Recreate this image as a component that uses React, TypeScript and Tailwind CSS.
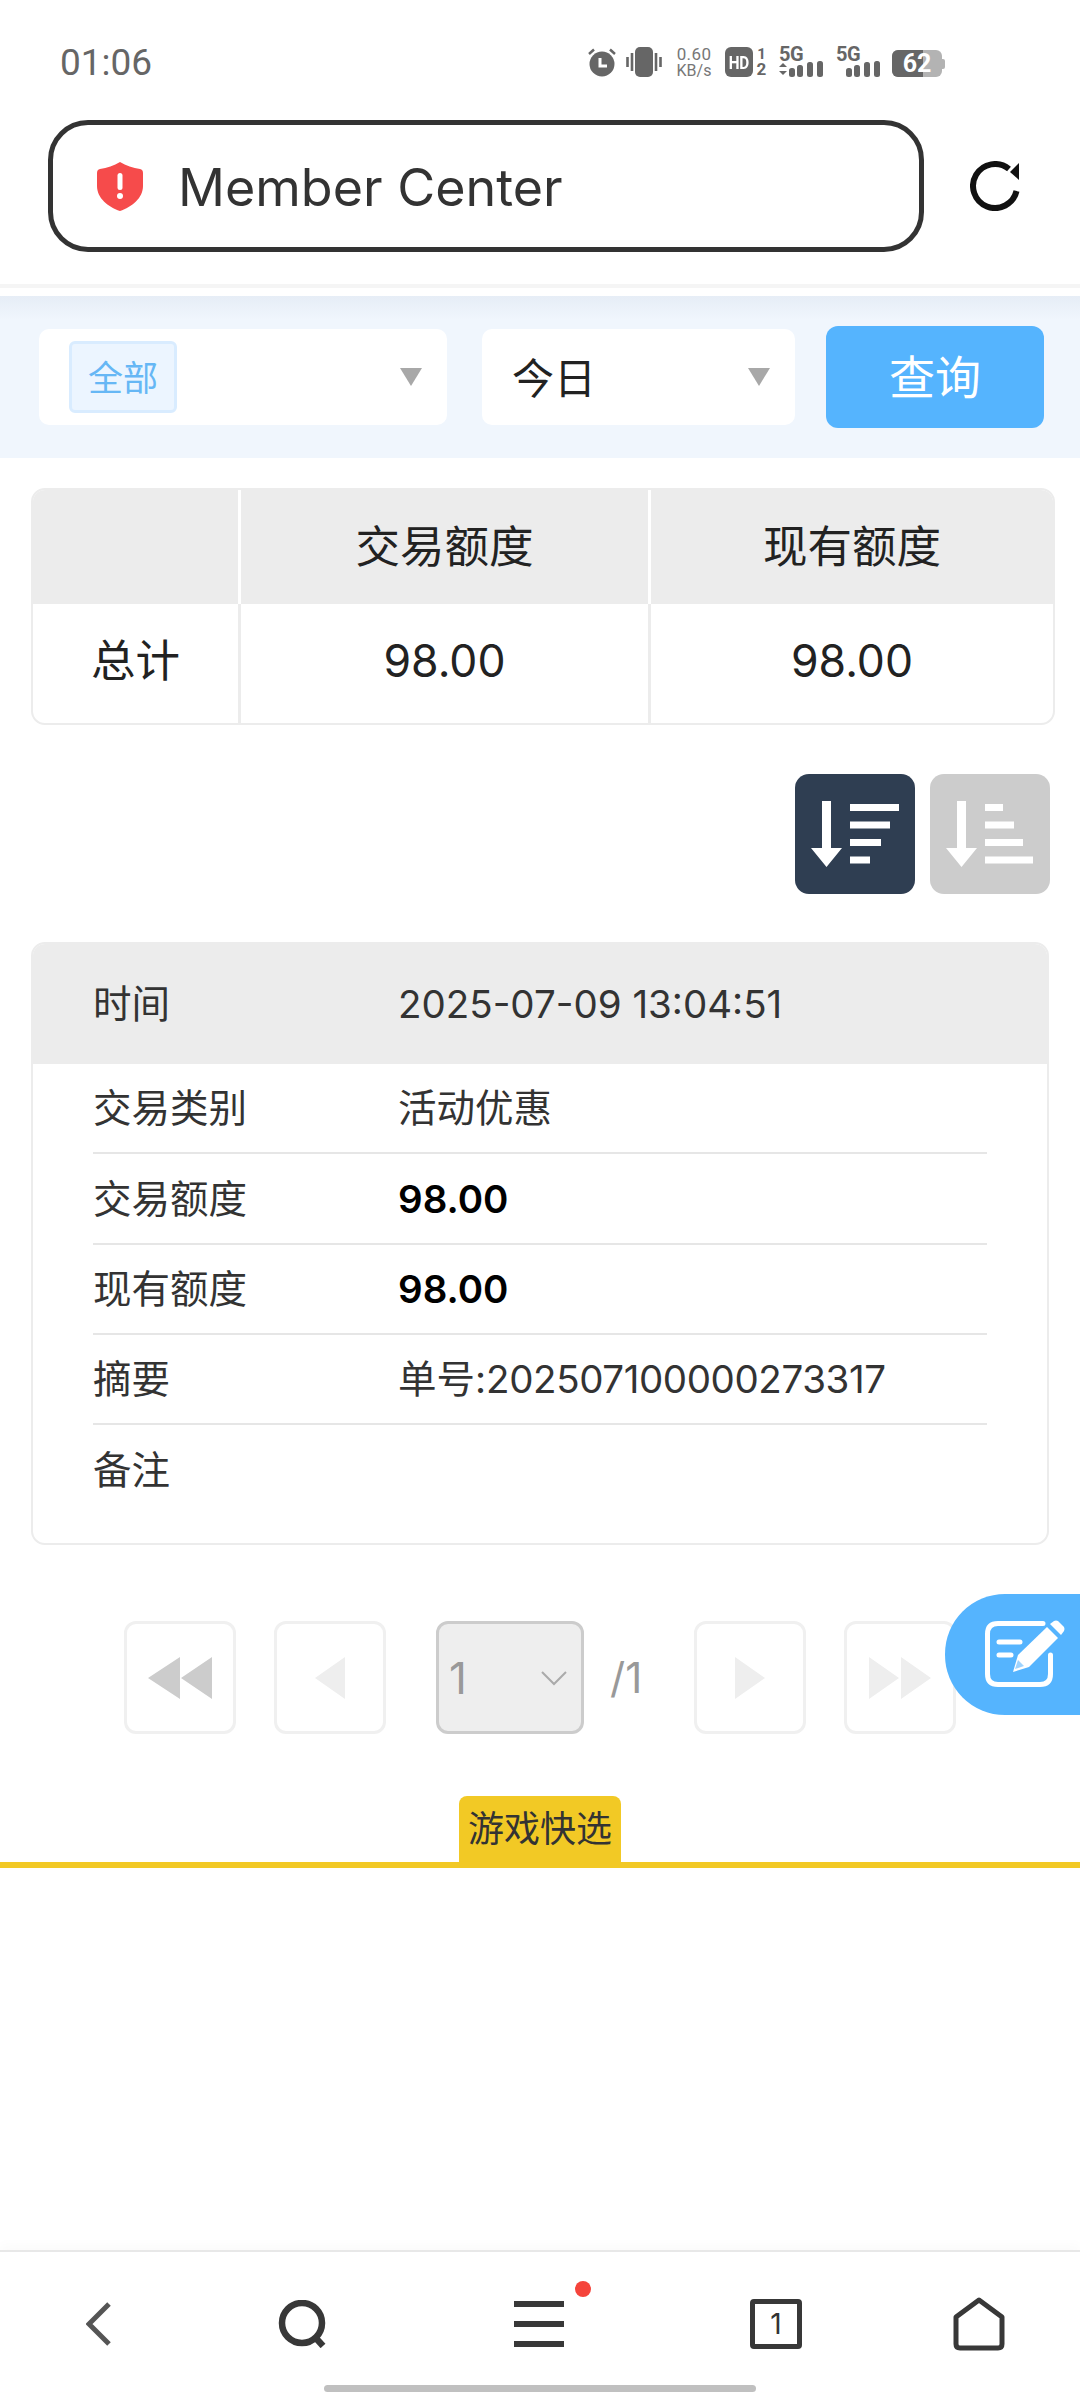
import type { ReactNode } from 'react';

const font = "font-['Inter','Noto_Sans_CJK_SC',sans-serif]";

function StatusIcons() {
  return (
    <div className="ml-auto mr-[135px] flex items-center h-[36px] text-[#666] font-['Roboto',sans-serif]">
      {/* alarm */}
      <svg width="30" height="30" viewBox="0 0 30 30">
        <circle cx="15" cy="17" r="12.5" fill="#666" />
        <path d="M2 7l5-4.5M28 7l-5-4.5" stroke="#666" strokeWidth="2.5" />
        <path d="M13 11v8h7" stroke="#fff" strokeWidth="3" fill="none" />
      </svg>
      {/* vibrate */}
      <svg width="36" height="30" viewBox="0 0 36 30" className="ml-[9px]">
        <rect x="9" y="0" width="18" height="30" rx="5" fill="#666" />
        <path d="M6 6v18M1.5 10v10M30 6v18M34.500 10v10" stroke="#666" strokeWidth="2.6" />
      </svg>
      <div className="ml-[13px] w-[38px] flex flex-col items-center leading-none text-[#777]">
        <span className="text-[17px] leading-[17px] tracking-[0.4px]">0.60</span>
        <span className="text-[16px] leading-[15px]">KB/s</span>
      </div>
      {/* HD + sim */}
      <div className="ml-[12px] w-[28px] h-[30px] rounded-[6px] bg-[#666] flex items-center justify-center">
        <span className="text-white text-[18px] font-bold tracking-[-0.5px] scale-x-[0.85]">HD</span>
      </div>
      <div className="ml-[2px] w-[13px] flex flex-col items-center font-bold">
        <span className="text-[15px] leading-[15px]">1</span>
        <span className="text-[17px] leading-[15px]">2</span>
      </div>
      <Signal className="ml-[11px]" arrows />
      <Signal className="ml-[13px]" />
      {/* battery */}
      <div className="ml-[12px] w-[53px] h-[27px] flex items-center mt-[3px]">
        <div className="relative w-[50px] h-[27px] rounded-[6px] overflow-hidden bg-[#b3b3b3] flex items-center justify-center">
          <div className="absolute left-0 top-0 h-full w-[31px] bg-[#666]" />
          <span className="relative text-white text-[25px] font-bold leading-none">62</span>
        </div>
        <div className="w-[3px] h-[10px] bg-[#b3b3b3] rounded-r-[2px]" />
      </div>
    </div>
  );
}

function Signal({ className, arrows }: { className?: string; arrows?: boolean }) {
  return (
    <div className={`relative w-[44px] h-[30px] ${className ?? ''}`}>
      <span className="absolute left-0 top-[-4px] text-[20px] font-bold leading-[22px] tracking-[-0.5px]">5G</span>
      <svg width="44" height="30" viewBox="0 0 44 30" className="absolute left-0 top-0">
        {arrows && <path d="M0 20l4-4 4 4zM0 24l4 4 4-4z" fill="#666" />}
        <rect x="10" y="21" width="6" height="9" rx="2.5" fill="#666" />
        <rect x="18" y="18" width="6" height="12" rx="2.500" fill="#666" />
        <rect x="28" y="15" width="6" height="15" rx="2.500" fill="#666" />
        <rect x="38" y="14" width="6" height="16" rx="2.500" fill="#666" />
      </svg>
    </div>
  );
}

function Caret() {
  return <div className="w-0 h-0 border-l-[11px] border-r-[11px] border-t-[18px] border-l-transparent border-r-transparent border-t-[#a8a8a8]" />;
}

function SortIcon({ bars, color }: { bars: number[]; color: string }) {
  return (
    <div className="w-[120px] h-[120px] rounded-[14px] flex items-center justify-center" style={{ backgroundColor: color }}>
      <svg width="120" height="120" viewBox="0 0 120 120" className="blur-[0.6px]">
        <path d="M27 27h9v47h11L31.5 93 16 74h11z" fill="#fff" />
        {bars.map((w, i) => (
          <rect key={i} x="55" y={30 + i * 17.5} width={w} height="7" fill="#fff" />
        ))}
      </svg>
    </div>
  );
}

function DetailRow({ label, children, h, last }: { label: string; children?: ReactNode; h: string; last?: boolean }) {
  return (
    <div className={`flex items-center pt-[2px] ${h} ${last ? '' : 'border-b-2 border-[#e6e6e6]'}`}>
      <span className="w-[305px] text-[#333]">{label}</span>
      <span className="text-[#333]">{children}</span>
    </div>
  );
}

function PageButton({ children }: { children: ReactNode }) {
  return (
    <div className="w-[112px] h-[113px] rounded-[12px] border-[3px] border-[#f0f0f0] flex items-center justify-center">
      {children}
    </div>
  );
}

export default function App() {
  return (
    <div className={`relative w-[1080px] h-[2400px] bg-white overflow-hidden flex flex-col ${font}`}>
      {/* status bar */}
      <div className="h-[120px] pt-[44px] pl-[60px]">
        <div className="flex items-center h-[36px]">
          <span className="text-[37px] leading-none text-[#666] font-['Roboto',sans-serif]">01:06</span>
          <StatusIcons />
        </div>
      </div>

      {/* address bar */}
      <div className="flex items-center h-[132px] pl-[48px]">
        <div className="w-[876px] h-[132px] border-[5px] border-[#333] rounded-[40px] flex items-center pl-[44px]">
          <svg width="46" height="49" viewBox="0 0 46 49">
            <path d="M23 0C29 3.500 36 6 43 7Q46 7.500 46 11V24C46 36 35 45 23 49C11 45 0 36 0 24V11Q0 7.500 3 7C10 6 17 3.500 23 0Z" fill="#f64b4b" />
            <rect x="20.500" y="11" width="5" height="17" rx="2.500" fill="#fff" />
            <circle cx="23" cy="34" r="3" fill="#fff" />
          </svg>
          <span className="ml-[35px] text-[52px] text-[#333] leading-none mt-[4px]">Member Center</span>
        </div>
        <svg width="50" height="50" viewBox="0 0 50 50" className="ml-[46px]">
          <path d="M39 8A22 22 0 1 0 46.500 30" fill="none" stroke="#111" strokeWidth="6" />
          <path d="M49 2V19L40 11z" fill="#111" />
        </svg>
      </div>

      <div className="mt-[32px] h-[4px] bg-[#f5f5f5]" />

      {/* filters */}
      <div className="mt-[8px] h-[162px] flex items-center pl-[39px] bg-[linear-gradient(#e6edf6,#f0f6fd_24px)]">
        <div className="w-[408px] h-[96px] bg-white rounded-[10px] flex items-center pl-[30px] pr-[25px]">
          <div className="w-[108px] h-[72px] bg-[#ecf5ff] border-[3px] border-[#d9ecff] rounded-[6px] flex items-center justify-center text-[35px] text-[#66b7f5] pt-[3px]">全部</div>
          <div className="ml-auto"><Caret /></div>
        </div>
        <div className="ml-[35px] w-[313px] h-[96px] bg-white rounded-[10px] flex items-center pl-[30px] pr-[25px]">
          <span className="text-[42px] text-[#222] mt-[3px]">今日</span>
          <div className="ml-auto"><Caret /></div>
        </div>
        <div className="ml-[31px] w-[218px] h-[102px] bg-[#55b4fe] rounded-[12px] flex items-center justify-center text-[46px] text-white">查询</div>
      </div>

      {/* totals */}
      <div className="mt-[30px] ml-[31px] w-[1024px] h-[237px] border-2 border-[#ececec] rounded-[14px] overflow-hidden text-[44.5px] text-[#222]">
        <div className="flex h-[114px] bg-[#ececec]">
          <div className="w-[208px] border-r-[3px] border-white" />
          <div className="w-[410px] border-r-[3px] border-white flex items-center justify-center">交易额度</div>
          <div className="flex-1 flex items-center justify-center">现有额度</div>
        </div>
        <div className="flex h-[119px]">
          <div className="w-[208px] pb-[4px] border-r-[3px] border-[#ececec] flex items-center justify-center">总计</div>
          <div className="w-[410px] pb-[4px] border-r-[3px] border-[#ececec] flex items-center justify-center">98.00</div>
          <div className="flex-1 pb-[4px] flex items-center justify-center">98.00</div>
        </div>
      </div>

      {/* sort */}
      <div className="mt-[49px] flex justify-end gap-[15px] pr-[30px]">
        <SortIcon bars={[49, 40, 31, 20]} color="#2f3e52" />
        <SortIcon bars={[18, 29, 38, 48]} color="#cccccc" />
      </div>

      {/* record */}
      <div className="mt-[48px] ml-[31px] w-[1018px] h-[603px] border-2 border-[#ececec] rounded-[14px] overflow-hidden text-[38.5px]">
        <div className="h-[120px] pt-[2px] bg-[#ececec] flex items-center pl-[60px]">
          <span className="w-[305px] text-[#333]">时间</span>
          <span className="text-[#333]">2025-07-09 13:04:51</span>
        </div>
        <div className="pl-[60px] pr-[60px]">
          <DetailRow label="交易类别" h="h-[90px]">活动优惠</DetailRow>
          <DetailRow label="交易额度" h="h-[91px]"><b className="font-semibold text-black">98.00</b></DetailRow>
          <DetailRow label="现有额度" h="h-[90px]"><b className="font-semibold text-black">98.00</b></DetailRow>
          <DetailRow label="摘要" h="h-[90px]">单号:<span className="tracking-[-0.4px]">202507100000273317</span></DetailRow>
          <DetailRow label="备注" h="h-[90px]" last />
        </div>
      </div>

      {/* pagination */}
      <div className="mt-[76px] h-[113px] pl-[124px] flex items-center">
        <PageButton>
          <svg width="64" height="42" viewBox="0 0 64 42" className="blur-[0.6px]"><path d="M32 0v42L0 21zM64 0v42L33 21z" fill="#cccccc" /></svg>
        </PageButton>
        <div className="ml-[38px]">
          <PageButton>
            <svg width="30" height="42" viewBox="0 0 30 42" className="blur-[0.6px]"><path d="M30 0v42L0 21z" fill="#eeeeee" /></svg>
          </PageButton>
        </div>
        <div className="ml-[50px] w-[148px] h-[113px] bg-[#eeeeee] border-[3px] border-[#cccccc] rounded-[12px] flex items-center pl-[10px] pr-[13px] text-[44px] text-[#999]">
          <span>1</span>
          <svg width="28" height="16" viewBox="0 0 28 16" className="ml-auto"><path d="M2 2l12 12L26 2" fill="none" stroke="#aaa" strokeWidth="2" /></svg>
        </div>
        <span className="ml-[26px] w-[84px] text-[42px] text-[#999]">/1</span>
        <PageButton>
          <svg width="30" height="42" viewBox="0 0 30 42" className="blur-[0.6px]"><path d="M0 0v42L30 21z" fill="#eeeeee" /></svg>
        </PageButton>
        <div className="ml-[38px]">
          <PageButton>
            <svg width="62" height="42" viewBox="0 0 62 42" className="blur-[0.6px]"><path d="M0 0v42L30 21zM32 0v42L62 21z" fill="#eeeeee" /></svg>
          </PageButton>
        </div>
      </div>

      {/* game tab */}
      <div className="mt-[62px] mx-auto w-[162px] h-[66px] bg-[#f2c925] rounded-t-[8px] flex items-center justify-center text-[36px] text-[#333]">游戏快选</div>
      <div className="h-[6px] bg-[#f2c925]" />

      {/* bottom nav */}
      <div className="mt-auto border-t-2 border-[#e8e8e8] shadow-[0_-6px_10px_rgba(0,0,0,0.02)]">
        <div className="h-[133px] pt-[11px] pl-[86px] flex items-center">
          <svg width="26" height="44" viewBox="0 0 26 44"><path d="M23 2L3 22l20 20" fill="none" stroke="#555" strokeWidth="5" /></svg>
          <svg width="50" height="48" viewBox="0 0 50 48" className="ml-[166px]">
            <circle cx="24" cy="23" r="20" fill="none" stroke="#383838" strokeWidth="6.500" />
            <path d="M36 36l9 10" stroke="#383838" strokeWidth="6.500" />
          </svg>
          <div className="relative ml-[186px] w-[50px] h-[46px] flex flex-col justify-between">
            <div className="h-[6px] bg-[#383838]" />
            <div className="h-[6px] bg-[#383838]" />
            <div className="h-[6px] bg-[#383838]" />
            <div className="absolute left-[61px] top-[-20px] w-[16px] h-[16px] rounded-full bg-[#f5443b]" />
          </div>
          <div className="ml-[186px] w-[52px] h-[50px] border-[5px] border-[#383838] rounded-[4px] flex items-center justify-center text-[28px] leading-none text-[#333]">1</div>
          <svg width="52" height="54" viewBox="0 0 52 54" className="ml-[151px]">
            <path d="M26 3L3 20v27q0 4 4 4h38q4 0 4-4V20z" fill="none" stroke="#383838" strokeWidth="5" strokeLinejoin="round" />
          </svg>
        </div>
        <div className="mx-auto w-[432px] h-[7px] rounded-full bg-[#c0c0c0]" />
        <div className="h-[8px]" />
      </div>

      {/* floating edit button */}
      <div className="absolute left-[945px] top-[1594px] w-[135px] h-[121px] rounded-l-[60px] bg-[#55b4fe] flex items-center pl-[37px]">
        <svg width="84" height="72" viewBox="0 0 84 72">
          <path d="M61 4.500H16q-10.500 0-10.500 10.500V55q0 10.500 10.500 10.500H58q10.500 0 10.500-10.500V36" fill="none" stroke="#fff" strokeWidth="5" strokeLinecap="round" />
          <path d="M17 23H38M17 36H29" stroke="#fff" strokeWidth="5" strokeLinecap="round" />
          <path d="M31 53l5-17L65 8l11 11-29 29z" fill="#fff" />
          <path d="M68 5l4-3q2-1 4 0l6 6q1 2 0 4l-3 4z" fill="#fff" />
          <path d="M33 50l3-9 6 6z" fill="#9ed3fe" />
        </svg>
      </div>
    </div>
  );
}
